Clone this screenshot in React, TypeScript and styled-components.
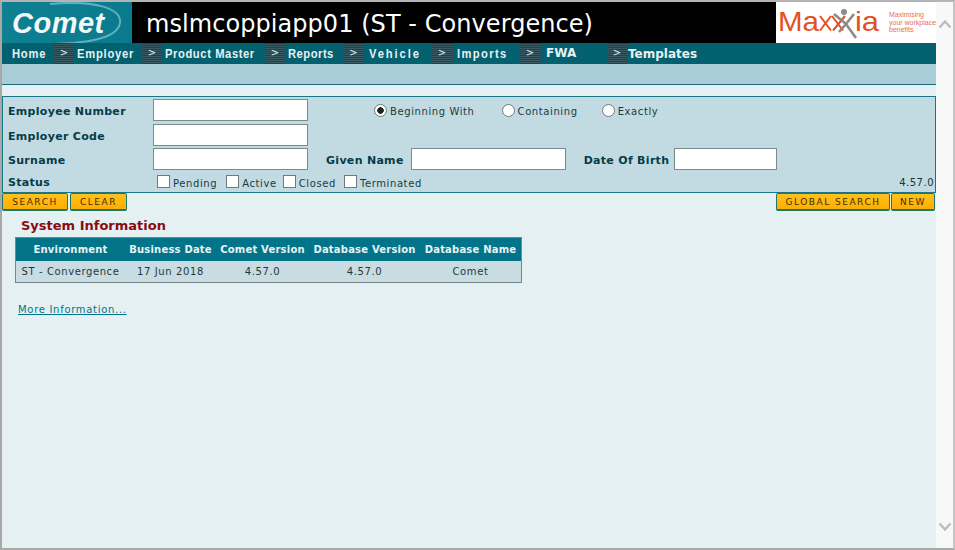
import * as React from 'react';
import styled, { createGlobalStyle } from 'styled-components';

const GlobalStyle = createGlobalStyle`
html, body {
    margin: 0;
    padding: 0;
    background: #f7f8f8;
}
`;

const navItems = [
    { label: 'Employer', gap: 0, arrowWidth: 20, textGap: 3, width: 56, spacing: 0.9 },
    { label: 'Product Master', gap: 9, arrowWidth: 20, textGap: 3, width: 89, spacing: 0.7 },
    { label: 'Reports', gap: 11, arrowWidth: 20, textGap: 3, width: 45, spacing: 0.6 },
    { label: 'Vehicle', gap: 10, arrowWidth: 21, textGap: 5, width: 51, spacing: 2.2 },
    { label: 'Imports', gap: 11, arrowWidth: 22, textGap: 4, width: 50, spacing: 1.6 },
    { label: 'FWA', gap: 12, arrowWidth: 22, textGap: 5, width: 31, plain: true, lift: 2 },
    { label: 'Templates', gap: 30, arrowWidth: 20, textGap: 1, width: 68, plain: true },
];

const statuses = [
    { label: 'Pending', gap: 9 },
    { label: 'Active', gap: 6 },
    { label: 'Closed', gap: 8 },
    { label: 'Terminated', gap: 0 },
];
const matchModes = [
    { label: 'Beginning With', gap: 27 },
    { label: 'Containing', gap: 24 },
    { label: 'Exactly', gap: 0 },
];
const tableColumns = [
    { title: 'Environment', width: 109, value: 'ST - Convergence' },
    { title: 'Business Date', width: 91, value: '17 Jun 2018' },
    { title: 'Comet Version', width: 93, value: '4.57.0' },
    { title: 'Database Version', width: 111, value: '4.57.0' },
    { title: 'Database Name', width: 101, value: 'Comet' },
];

export default function App() {
    return <Window>
        <GlobalStyle />
        <Main>
            <Header>
                <CometLogo>
                    <CometArc viewBox="0 0 130 41">
                        <path d="M48 2 C92 -2 120 6 118 21 C116 34 92 41 52 42" fill="none" stroke="#5fb0bd" strokeWidth="2" />
                    </CometArc>
                    <CometName>Comet</CometName>
                </CometLogo>
                <ServerTitle>mslmcoppiapp01 (ST - Convergence)</ServerTitle>
                <MaxxiaLogo viewBox="0 0 160 41">
                    <text x="2" y="28.5" fontFamily="'Liberation Sans', sans-serif" fontSize="28" fill="#e2511f" textLength="41" lengthAdjust="spacingAndGlyphs">Ma</text>
                    <path d="M44 14 L55 28.5 M55 14 L44 28.5 M56 14 L67 28.5 M69 14 L57 28.5" stroke="#e2511f" strokeWidth="2" />
                    <circle cx="68" cy="10" r="3" fill="#8d8a87" />
                    <path d="M58 12 L70 22 L78 12 M70 22 L80 36 M70 22 L63 30" stroke="#8d8a87" strokeWidth="2.6" fill="none" />
                    <text x="79" y="28.5" fontFamily="'Liberation Sans', sans-serif" fontSize="28" fill="#e2511f" textLength="24" lengthAdjust="spacingAndGlyphs">ia</text>
                    <MaxxiaTag x="113" y="15">Maximising</MaxxiaTag>
                    <MaxxiaTag x="113" y="22.5">your workplace</MaxxiaTag>
                    <MaxxiaTag x="113" y="30">benefits</MaxxiaTag>
                </MaxxiaLogo>
            </Header>
            <Nav>
                <NavLink $width={42} $spacing={0.9}>Home</NavLink>
                {navItems.map(item => (
                    <NavItem key={item.label} $gap={item.gap}>
                        <NavArrow $width={item.arrowWidth}>&gt;</NavArrow>
                        <NavLink $plain={item.plain} $gap={item.textGap} $width={item.width} $spacing={item.spacing} $lift={item.lift}>{item.label}</NavLink>
                    </NavItem>
                ))}
            </Nav>
            <SubBand />
            <SearchPanel>
                <Row>
                    <Label>Employee Number</Label>
                    <TextBox />
                    <Modes>
                        {matchModes.map((mode, i) => (
                            <Mode key={mode.label} $gap={mode.gap}>
                                <Radio $checked={i === 0} />
                                <OptionText $drop={2}>{mode.label}</OptionText>
                            </Mode>
                        ))}
                    </Modes>
                </Row>
                <Row>
                    <Label>Employer Code</Label>
                    <TextBox />
                </Row>
                <Row>
                    <Label>Surname</Label>
                    <TextBox />
                    <InlineLabel $gap={18} $after={7}>Given Name</InlineLabel>
                    <TextBox />
                    <InlineLabel $gap={18} $after={5}>Date Of Birth</InlineLabel>
                    <TextBox $width={103} />
                </Row>
                <StatusRow>
                    <Label>Status</Label>
                    <Statuses>
                        {statuses.map(status => (
                            <Status key={status.label} $gap={status.gap}>
                                <CheckBox />
                                <OptionText $drop={4}>{status.label}</OptionText>
                            </Status>
                        ))}
                    </Statuses>
                    <Version>4.57.0</Version>
                </StatusRow>
            </SearchPanel>
            <Actions>
                <ActionGroup $gap={2}>
                    <ActionButton $width={66}>SEARCH</ActionButton>
                    <ActionButton $width={57}>CLEAR</ActionButton>
                </ActionGroup>
                <ActionGroup $gap={1}>
                    <ActionButton $width={114}>GLOBAL SEARCH</ActionButton>
                    <ActionButton $width={44}>NEW</ActionButton>
                </ActionGroup>
            </Actions>
            <Content>
                <SectionTitle>System Information</SectionTitle>
                <InfoTable>
                    <thead>
                        <tr>
                            {tableColumns.map(col => <HeadCell key={col.title} $width={col.width}>{col.title}</HeadCell>)}
                        </tr>
                    </thead>
                    <tbody>
                        <tr>
                            {tableColumns.map(col => <BodyCell key={col.title}>{col.value}</BodyCell>)}
                        </tr>
                    </tbody>
                </InfoTable>
                <MoreLink href="#">More Information...</MoreLink>
            </Content>
        </Main>
        <ScrollTrack>
            <Chevron viewBox="0 0 14 10"><path d="M1.5 8.5 L7 2.5 L12.5 8.5" /></Chevron>
            <Chevron viewBox="0 0 14 10"><path d="M1.5 1.5 L7 7.5 L12.5 1.5" /></Chevron>
        </ScrollTrack>
    </Window>;
}

const Window = styled.div`
display: flex;
box-sizing: border-box;
width: 955px;
height: 550px;
overflow: hidden;
border-top: 2px solid #b4b4b4;
border-left: 2px solid #a8a8a8;
border-right: 2px solid #c4c4c4;
border-bottom: 2px solid #a8a8a8;
font-family: "DejaVu Sans", Verdana, sans-serif;
`;

const Main = styled.div`
display: flex;
flex-direction: column;
width: 934px;
background: #e4f0f2;
`;

const Header = styled.div`
display: flex;
align-items: stretch;
height: 41px;
background: #000;
`;

const CometLogo = styled.div`
position: relative;
width: 130px;
padding: 4px 0 0 10px;
box-sizing: border-box;
background: linear-gradient(90deg, #0f7f92 0%, #0a7a8e 100%);
overflow: hidden;
`;

const CometArc = styled.svg`
position: absolute;
top: 0;
left: 0;
width: 130px;
height: 41px;
`;

const CometName = styled.div`
position: relative;
font-family: "Liberation Sans", Arial, sans-serif;
font-size: 29px;
line-height: 34px;
font-weight: bold;
font-style: italic;
letter-spacing: 0.5px;
color: #f2f8f8;
`;

const ServerTitle = styled.div`
flex: 1;
padding: 2px 0 0 14px;
font-size: 24px;
line-height: 41px;
letter-spacing: 0.06px;
color: #fff;
white-space: nowrap;
`;

const MaxxiaLogo = styled.svg`
width: 160px;
height: 41px;
background: #fff;
`;

const MaxxiaTag = styled.text`
font-family: "Liberation Sans", Arial, sans-serif;
font-size: 7px;
fill: #e8704a;
`;

const Nav = styled.div`
display: flex;
align-items: center;
height: 21px;
padding-left: 10px;
background: #02606f;
`;

const NavItem = styled.div<{ $gap: number }>`
display: flex;
align-items: center;
height: 100%;
margin-left: ${p => p.$gap}px;
`;

const NavArrow = styled.div<{ $width: number }>`
width: ${p => p.$width}px;
height: 100%;
text-align: center;
font-family: "DejaVu Sans", sans-serif;
font-size: 10px;
line-height: 20px;
color: #dfeef0;
background: repeating-linear-gradient(180deg, #22424b 0, #22424b 1px, #3a5a63 1px, #3a5a63 2px);
`;

const NavLink = styled.div<{ $plain?: boolean; $gap?: number; $width?: number; $spacing?: number; $lift?: number }>`
margin-left: ${p => p.$gap ?? 0}px;
padding-bottom: ${p => p.$lift ?? 0}px;
width: ${p => p.$width}px;
font-family: ${p => (p.$plain ? '"DejaVu Sans", sans-serif' : '"Liberation Sans", Arial, sans-serif')};
font-size: ${p => (p.$plain ? '12px' : '13px')};
font-weight: bold;
letter-spacing: ${p => p.$spacing ?? 0}px;
transform: ${p => (p.$plain ? 'none' : 'scaleX(0.86)')};
transform-origin: left center;
color: #e8f1f3;
white-space: nowrap;
`;

const SubBand = styled.div`
height: 20px;
background: #a8cdd8;
border-bottom: 1px solid #1b6b78;
`;

const SearchPanel = styled.div`
display: flex;
flex-direction: column;
box-sizing: border-box;
height: 97px;
margin-top: 11px;
padding: 1px 1px 0 5px;
background: #c2dbe2;
border: 1px solid #1a7686;
`;

const Row = styled.div`
display: flex;
align-items: center;
height: 24.4px;
`;

const Label = styled.div`
width: 145px;
flex: none;
padding-top: 3px;
font-size: 11px;
font-weight: bold;
letter-spacing: 0.3px;
color: #063c48;
white-space: nowrap;
`;

const InlineLabel = styled.div<{ $gap: number; $after: number }>`
margin: 0 ${p => p.$after}px 0 ${p => p.$gap}px;
padding-top: 3px;
font-size: 11px;
font-weight: bold;
letter-spacing: 0.3px;
color: #063c48;
white-space: nowrap;
`;

const TextBox = styled.div<{ $width?: number }>`
box-sizing: border-box;
flex: none;
width: ${p => p.$width ?? 155}px;
height: 22px;
background: #fff;
border: 1px solid #7b8b90;
`;

const Modes = styled.div`
display: flex;
margin-left: 66px;
margin-top: 1px;
`;

const Mode = styled.div<{ $gap: number }>`
display: flex;
align-items: center;
gap: 3px;
margin-right: ${p => p.$gap}px;
`;

const Radio = styled.span<{ $checked?: boolean }>`
box-sizing: border-box;
width: 13px;
height: 13px;
border-radius: 50%;
border: 1px solid #6e7c80;
background: ${p => (p.$checked ? 'radial-gradient(circle, #222 0, #222 3px, #fff 3.5px)' : '#fff')};
`;

const OptionText = styled.span<{ $drop: number }>`
padding-top: ${p => p.$drop}px;
font-size: 10px;
letter-spacing: 0.6px;
color: #1c3a42;
white-space: nowrap;
`;

const StatusRow = styled.div`
display: flex;
align-items: center;
height: 20px;
`;

const Statuses = styled.div`
display: flex;
margin-left: 4px;
`;

const Status = styled.div<{ $gap: number }>`
display: flex;
align-items: center;
gap: 3px;
margin-right: ${p => p.$gap}px;
`;

const CheckBox = styled.span`
box-sizing: border-box;
width: 13px;
height: 13px;
background: #fff;
border: 1px solid #6e7c80;
`;

const Version = styled.div`
margin-left: auto;
padding-top: 2px;
font-size: 10px;
letter-spacing: 0.5px;
color: #16323a;
`;

const Actions = styled.div`
display: flex;
justify-content: space-between;
padding-right: 1px;
`;

const ActionGroup = styled.div<{ $gap: number }>`
display: flex;
gap: ${p => p.$gap}px;
`;

const ActionButton = styled.button<{ $width: number }>`
box-sizing: border-box;
width: ${p => p.$width}px;
height: 18px;
padding: 0;
font-family: "DejaVu Sans", sans-serif;
font-size: 9px;
letter-spacing: 1.5px;
line-height: 12px;
color: #3a3000;
background: linear-gradient(180deg, #ffc21c 0%, #ffad00 100%);
border: 1px solid #1a7a6a;
border-bottom-width: 2px;
border-radius: 2px;
`;

const Content = styled.div`
padding: 7px 0 0 13px;
`;

const SectionTitle = styled.div`
margin-left: 6px;
font-size: 13px;
font-weight: bold;
line-height: 16px;
color: #880d12;
`;

const InfoTable = styled.table`
box-sizing: border-box;
width: 507px;
margin-top: 3px;
table-layout: fixed;
border-collapse: collapse;
border: 1px solid #75878c;
background: #c8dce2;
`;

const HeadCell = styled.th<{ $width: number }>`
width: ${p => p.$width}px;
height: 23px;
padding: 0;
font-size: 10px;
font-weight: bold;
letter-spacing: 0.2px;
color: #e8f2f4;
background: #02748a;
white-space: nowrap;
`;

const BodyCell = styled.td`
height: 21px;
padding: 0;
font-size: 10px;
letter-spacing: 0.6px;
text-align: center;
color: #1c3a42;
white-space: nowrap;
`;

const MoreLink = styled.a`
display: inline-block;
margin: 21px 0 0 3px;
font-size: 10px;
letter-spacing: 0.7px;
color: #02738a;
`;

const ScrollTrack = styled.div`
display: flex;
flex-direction: column;
justify-content: space-between;
align-items: center;
flex: 1;
padding: 17px 0 16px;
background: #f7f8f8;
`;

const Chevron = styled.svg`
width: 14px;
height: 10px;
fill: none;
stroke: #b9bcbd;
stroke-width: 2.4;
`;
